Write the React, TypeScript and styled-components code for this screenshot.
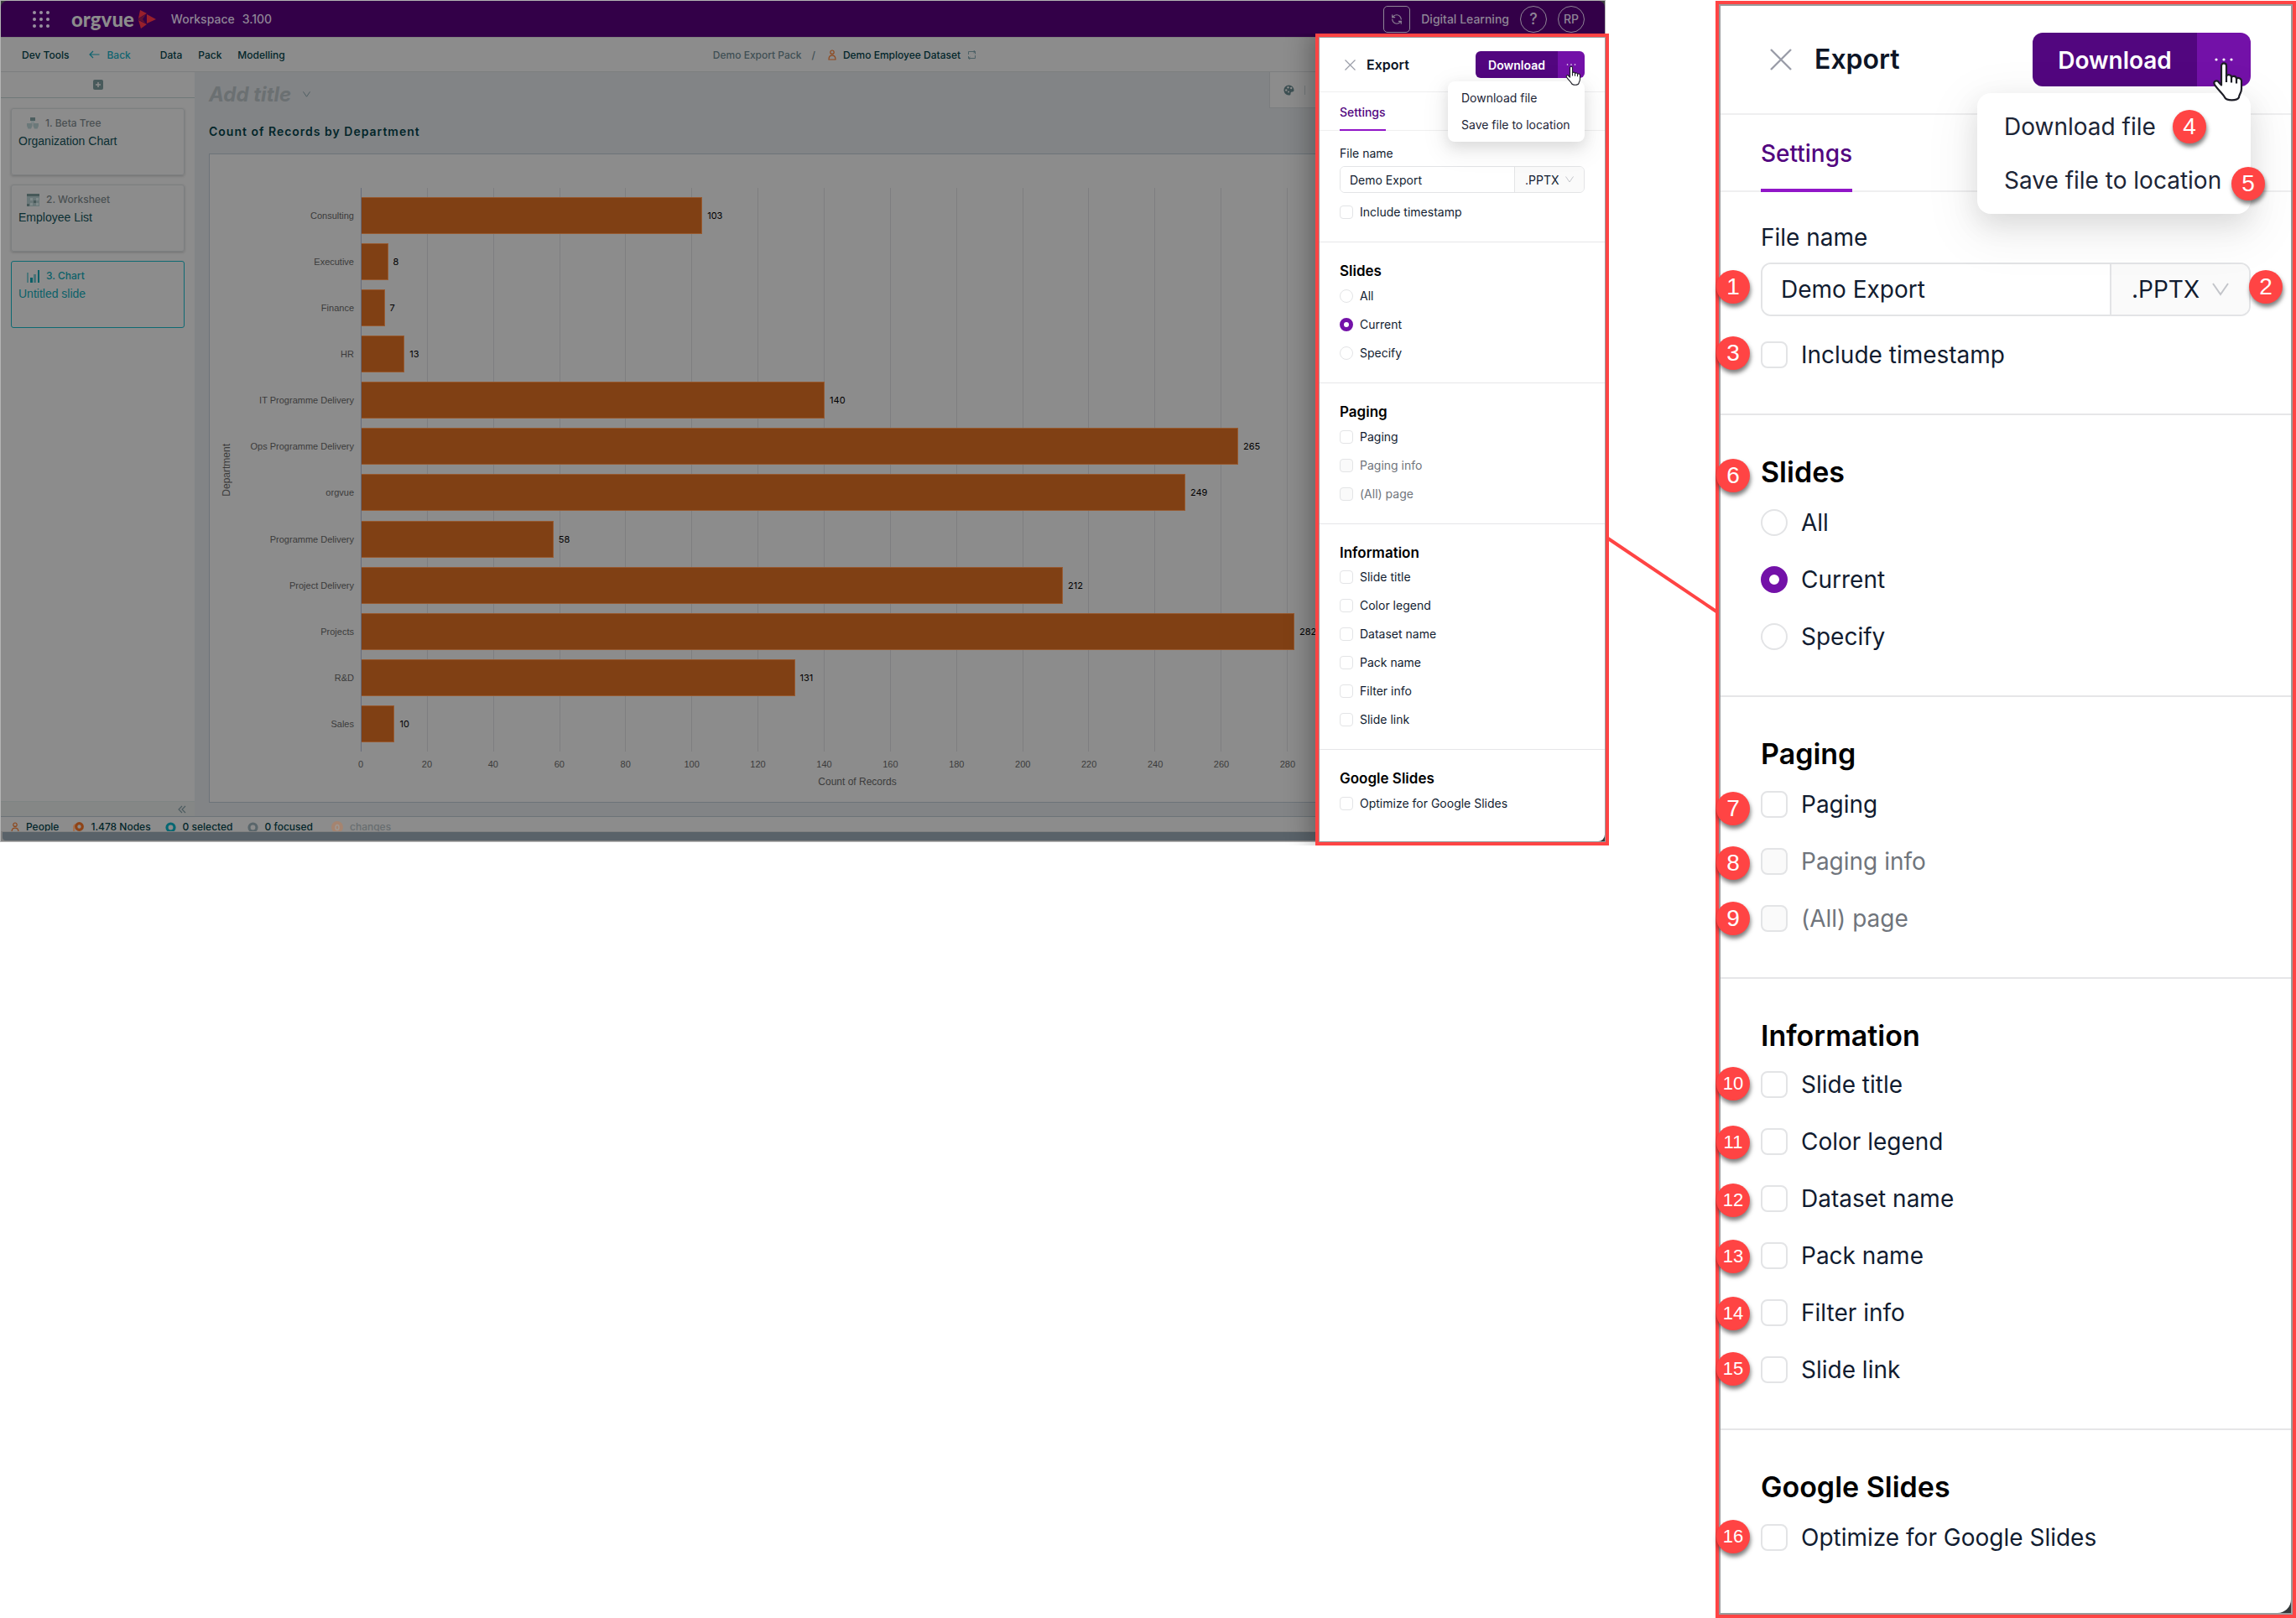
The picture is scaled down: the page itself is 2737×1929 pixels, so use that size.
import React, { useId } from "react";
import styled, { createGlobalStyle, css, ThemeProvider } from "styled-components";
import { RefreshCcw } from "lucide-react";

const GlobalStyle = createGlobalStyle`
  * {
    box-sizing: border-box;
  }

  body {
    margin: 0;
    background: #ffffff;
    font-family: Inter, "Liberation Sans", sans-serif;
  }

  h1, h2, h3, p, ul {
    margin: 0;
    padding: 0;
  }

  button, input, select {
    font-family: inherit;
  }

  svg {
    display: block;
    flex-shrink: 0;
  }
`;

const departments = [
  { name: "Consulting", count: 103 },
  { name: "Executive", count: 8 },
  { name: "Finance", count: 7 },
  { name: "HR", count: 13 },
  { name: "IT Programme Delivery", count: 140 },
  { name: "Ops Programme Delivery", count: 265 },
  { name: "orgvue", count: 249 },
  { name: "Programme Delivery", count: 58 },
  { name: "Project Delivery", count: 212 },
  { name: "Projects", count: 282 },
  { name: "R&D", count: 131 },
  { name: "Sales", count: 10 },
];

const axisMax = 300;
const ticks = Array.from({ length: 16 }, (_, i) => i * 20);

// Callout markers, centred on x / y inside the enlarged panel
const markers = [
  { n: 1, x: 21, y: 341 },
  { n: 2, x: 656, y: 341 },
  { n: 3, x: 21, y: 420 },
  { n: 4, x: 565, y: 150 },
  { n: 5, x: 635, y: 218 },
  { n: 6, x: 21, y: 566 },
  { n: 7, x: 21, y: 963 },
  { n: 8, x: 21, y: 1028 },
  { n: 9, x: 21, y: 1094 },
  { n: 10, x: 21, y: 1291 },
  { n: 11, x: 21, y: 1361 },
  { n: 12, x: 21, y: 1430 },
  { n: 13, x: 21, y: 1497 },
  { n: 14, x: 21, y: 1565 },
  { n: 15, x: 21, y: 1631 },
  { n: 16, x: 21, y: 1831 },
];

/* ---------- page ---------- */

const Page = styled.main`
  display: flex;
  align-items: flex-start;
`;

const Stage = styled.div`
  flex: 1;
  min-width: 0;
  display: grid;
`;

const Connector = styled.svg`
  width: 127px;
  height: 96px;
  margin-top: 638px;
  overflow: visible;
`;

const Callout = styled.div`
  position: relative;
  flex: 0 0 692px;
  min-width: 0;
  margin-top: 1px;
`;

const Marker = styled.span<{ $x: number; $y: number; $wide: boolean }>`
  position: absolute;
  z-index: 3;
  left: ${(p) => p.$x}px;
  top: ${(p) => p.$y}px;
  width: 40px;
  height: 40px;
  margin: -20px 0 0 -20px;
  border-radius: 50%;
  background: #ff4444;
  box-shadow: 1px 4px 5px rgba(0, 0, 0, 0.5);
  color: #ffffff;
  font-family: "Liberation Sans", Arial, sans-serif;
  font-size: ${(p) => (p.$wide ? 22 : 28)}px;
  line-height: 40px;
  text-align: center;
`;

/* ---------- application window ---------- */

const Window = styled.div`
  grid-area: 1 / 1;
  display: flex;
  flex-direction: column;
  min-width: 0;
  margin: 0 4px 4px 0;
  border: 1px solid #b4b4b4;
  background: #3a3d3e;
  overflow: hidden;
`;

const TopBar = styled.header`
  display: flex;
  align-items: center;
  height: 43px;
  padding: 0 24px 0 37px;
  border-radius: 8px 8px 0 0;
  background: #330048;
  color: #8f8596;
  font-size: 14px;
  font-weight: 500;
`;

const Brand = styled.span`
  display: flex;
  align-items: center;
  gap: 4px;
  margin: 0 17px 0 25px;
  color: #8c8c8c;
  font-family: Lato, sans-serif;
  font-size: 24px;
  font-weight: 900;
  line-height: 36px;
`;

const Version = styled.span`
  margin-left: 9px;
`;

const TopActions = styled.div`
  display: flex;
  align-items: center;
  gap: 13px;
  margin-left: auto;
`;

const TopButton = styled.button<{ $round?: boolean }>`
  display: flex;
  align-items: center;
  justify-content: center;
  width: 32px;
  height: 32px;
  padding: 0;
  border: 1px solid #8f8596;
  border-radius: ${(p) => (p.$round ? "50%" : "5px")};
  background: none;
  color: inherit;
  font-size: 14px;
  font-weight: 500;
`;

const HelpButton = styled(TopButton)`
  font-size: 18px;
`;

const NavBar = styled.nav`
  display: flex;
  align-items: center;
  height: 42px;
  border-top: 1px solid #808080;
  border-bottom: 1px solid #7c7e7f;
  background: #8c8c8c;
  font-size: 12px;
  font-weight: 500;
`;

const NavLinks = styled.div`
  display: flex;
  align-items: center;
  flex: 11;
  padding-left: 25px;
`;

const NavSpacer = styled.div`
  flex: 10;
`;

const NavLink = styled.a<{ $accent?: boolean }>`
  display: flex;
  align-items: center;
  gap: 8px;
  margin-right: ${(p) => (p.$accent ? 35 : 19)}px;
  color: ${(p) => (p.$accent ? "#0f6470" : "#02262a")};
  text-decoration: none;
`;

const DevLink = styled(NavLink)`
  margin-right: 24px;
`;

const Breadcrumb = styled.div`
  display: flex;
  align-items: center;
  gap: 12px;
  color: #3f4f54;
`;

const DatasetName = styled.a`
  display: flex;
  align-items: center;
  gap: 8px;
  margin-left: 3px;
  color: #02262a;
  text-decoration: none;
`;

const Body = styled.div`
  flex: 1;
  display: flex;
  min-height: 0;
`;

const Sidebar = styled.aside`
  display: flex;
  flex-direction: column;
  flex: 0 0 231px;
  background: #8c8c8c;
`;

const AddRow = styled.div`
  display: flex;
  align-items: center;
  justify-content: center;
  height: 31px;
  border-bottom: 1px solid #6f7878;
`;

const AddButton = styled.button`
  display: flex;
  align-items: center;
  justify-content: center;
  width: 12px;
  height: 12px;
  padding: 0;
  border: 0;
  border-radius: 2px;
  background: #485a5b;
`;

const SlideList = styled.ul`
  display: flex;
  flex-direction: column;
  flex: 1;
  gap: 11px;
  padding: 12px;
  list-style: none;
`;

const SlideCard = styled.li<{ $active?: boolean }>`
  height: 80px;
  padding: 7px 8px;
  border: 1px solid ${(p) => (p.$active ? "#0e6a73" : "#7c7f80")};
  border-radius: 3px;
  box-shadow: ${(p) => (p.$active ? "none" : "0 1px 3px rgba(0, 0, 0, 0.2)")};
  color: ${(p) => (p.$active ? "#0b6169" : "#0b2f33")};
  font-family: "Liberation Sans", Arial, sans-serif;
  font-size: 14px;
  line-height: 22px;
`;

const SlideType = styled.div<{ $active?: boolean }>`
  display: flex;
  align-items: center;
  gap: 8px;
  height: 20px;
  padding-left: 10px;
  color: ${(p) => (p.$active ? "#0b6169" : "#4a5052")};
  font-family: Inter, sans-serif;
  font-size: 12px;
  font-weight: 500;
`;

const SidebarFoot = styled.div`
  display: flex;
  align-items: center;
  justify-content: flex-end;
  height: 18px;
  padding-right: 10px;
  border-top: 1px solid #7f8483;
  background: #858786;
`;

const Main = styled.section`
  flex: 1;
  display: flex;
  flex-direction: column;
  min-width: 0;
  padding: 0 17px 16px;
  background: #828486;
`;

const MainHead = styled.div`
  display: flex;
  justify-content: space-between;
  margin-right: -17px;
`;

const TitleButton = styled.button`
  display: flex;
  align-items: center;
  gap: 14px;
  margin-top: 10px;
  padding: 0;
  border: 0;
  background: none;
  color: #6b7072;
  font-size: 24px;
  font-style: italic;
  font-weight: 700;
  line-height: 32px;
`;

const Toolbar = styled.div`
  display: flex;
  align-items: center;
  gap: 12px;
  width: 400px;
  height: 43px;
  padding-left: 16px;
  border: 1px solid #7a7d7f;
  border-top: 0;
  background: #8c8c8c;
`;

const ToolDivider = styled.span`
  width: 1px;
  height: 11px;
  background: #737879;
`;

const ChartTitle = styled.h2`
  margin: 18px 0 16px;
  color: #02262a;
  font-size: 14px;
  font-weight: 600;
  letter-spacing: 1px;
  line-height: 20px;
`;

const ChartPanel = styled.div`
  flex: 1;
  display: grid;
  grid-template-columns: 40px 140px 1fr;
  grid-template-rows: 1fr 22px 22px;
  padding: 40px 281px 16px 0;
  border: 1px solid #6c7379;
  background: #8c8c8c;
  font-family: "Liberation Sans", Arial, sans-serif;
  font-size: 11px;
  color: #3b3b3b;
`;

const YTitle = styled.div`
  align-self: center;
  justify-self: center;
  writing-mode: vertical-rl;
  transform: rotate(180deg);
  font-size: 12px;
  line-height: 14px;
`;

const Rows = styled.div`
  display: flex;
  flex-direction: column;
  justify-content: space-between;
  padding: 11px 0;
`;

const Category = styled.div`
  height: 44px;
  padding-right: 8px;
  line-height: 44px;
  text-align: right;
`;

const Plot = styled.div`
  display: grid;
`;

const GridLines = styled.div`
  grid-area: 1 / 1;
  display: flex;
  border-left: 1px solid #666c7c;
`;

const GridCell = styled.span`
  flex: 1;
  border-right: 1px solid #7e7e80;
`;

const Bars = styled(Rows)`
  grid-area: 1 / 1;
  padding-left: 1px;
`;

const BarRow = styled.div`
  display: flex;
  align-items: center;
  gap: 6px;
  height: 44px;
  color: #000000;
  font-family: Inter, sans-serif;
`;

const Bar = styled.div`
  height: 44px;
  border: 1px solid #97592f;
  border-left: 0;
  background: #804014;
`;

const TickRow = styled.div`
  grid-column: 3;
  display: flex;
  justify-content: space-between;
  padding-top: 8px;
  line-height: 14px;
`;

const Tick = styled.span`
  display: flex;
  justify-content: center;
  width: 0;
`;

const XTitle = styled.div`
  grid-column: 3;
  padding-top: 6px;
  font-size: 12px;
  line-height: 16px;
  text-align: center;
`;

const StatusBar = styled.footer`
  display: flex;
  align-items: flex-start;
  height: 18px;
  padding-left: 12px;
  border-top: 1px solid #6c7378;
  background: #8c8c8c;
  overflow: hidden;
  color: #02262a;
  font-size: 12px;
  font-weight: 500;
  line-height: 24px;
`;

const StatusItem = styled.span<{ $faded?: boolean }>`
  display: flex;
  align-items: center;
  gap: 8px;
  margin-left: ${(p) => (p.$faded ? 5 : 0)}px;
  margin-right: 17px;
  color: ${(p) => (p.$faded ? "#686e70" : "inherit")};
`;

const ScrollTrack = styled.div`
  padding: 1px 1px 1px 2px;
  background: #808080;
`;

const ScrollThumb = styled.div`
  height: 10px;
  border-radius: 0 0 0 4px;
  background: #596269;
`;

/* ---------- export drawer, sized by theme.k ---------- */

const Frame = styled.div`
  border: 4px solid #ff4444;
`;

const StageFrame = styled(Frame)`
  grid-area: 1 / 1;
  justify-self: end;
  position: relative;
  width: 350px;
  margin-top: 40px;
  box-shadow: -2px 0 28px 4px rgba(0, 0, 0, 0.3);
  clip-path: inset(0 0 0 -40px);
`;

const Edge = styled.div`
  border: ${(p) => p.theme.k}px solid #999b9c;
  background: #33383a;
`;

const Panel = styled.form`
  position: relative;
  border-bottom-right-radius: ${(p) => 8 * p.theme.k}px;
  background: #ffffff;
  color: #111c30;
  font-size: ${(p) => 14 * p.theme.k}px;
  line-height: ${(p) => 22 * p.theme.k}px;
`;

const DrawerHead = styled.div`
  display: flex;
  align-items: center;
  height: ${(p) => 65 * p.theme.k}px;
  padding: 0 ${(p) => 24 * p.theme.k}px;
  border-bottom: ${(p) => p.theme.k}px solid #efeff0;
`;

const CloseButton = styled.button`
  display: flex;
  align-items: center;
  justify-content: center;
  width: ${(p) => 24 * p.theme.k}px;
  height: ${(p) => 24 * p.theme.k}px;
  margin-right: ${(p) => 8 * p.theme.k}px;
  padding: 0;
  border: 0;
  background: none;
`;

const DrawerTitle = styled.h2`
  color: #0d1526;
  font-size: ${(p) => 16 * p.theme.k}px;
  font-weight: 600;
  line-height: ${(p) => 22 * p.theme.k}px;
`;

const Heading = styled.h3`
  color: #000000;
  font-size: ${(p) => 17 * p.theme.k}px;
  font-weight: 600;
  line-height: ${(p) => 22 * p.theme.k}px;
`;

const SplitButton = styled.div`
  position: relative;
  display: flex;
  height: ${(p) => 32 * p.theme.k}px;
  margin-left: auto;
`;

const DownloadButton = styled.button`
  width: ${(p) => 98 * p.theme.k}px;
  padding: ${(p) => p.theme.k}px 0 0;
  border: 0;
  border-radius: ${(p) => `${6 * p.theme.k}px 0 0 ${6 * p.theme.k}px`};
  background: #52067f;
  color: #ffffff;
  font-size: ${(p) => 14 * p.theme.k}px;
  font-weight: 600;
`;

const MoreButton = styled.button`
  display: flex;
  align-items: center;
  justify-content: center;
  width: ${(p) => 32 * p.theme.k}px;
  padding: 0;
  border: 0;
  border-radius: ${(p) => `0 ${6 * p.theme.k}px ${6 * p.theme.k}px 0`};
  background: #7311a8;
`;

const Menu = styled.div`
  position: absolute;
  z-index: 1;
  top: ${(p) => 36 * p.theme.k}px;
  right: 0;
  min-width: ${(p) => 163 * p.theme.k}px;
  padding: ${(p) => 4 * p.theme.k}px;
  border-radius: ${(p) => 8 * p.theme.k}px;
  background: #ffffff;
  box-shadow:
    0 ${(p) => 6 * p.theme.k}px ${(p) => 16 * p.theme.k}px rgba(0, 0, 0, 0.1),
    0 ${(p) => 9 * p.theme.k}px ${(p) => 28 * p.theme.k}px ${(p) => 8 * p.theme.k}px rgba(0, 0, 0, 0.05);
`;

const MenuItem = styled.button`
  display: block;
  width: 100%;
  padding: ${(p) => `${5 * p.theme.k}px ${12 * p.theme.k}px`};
  border: 0;
  background: none;
  color: #1c2536;
  font-size: ${(p) => 14 * p.theme.k}px;
  line-height: ${(p) => 22 * p.theme.k}px;
  text-align: left;
  white-space: nowrap;
`;

const Cursor = styled.svg`
  position: absolute;
  z-index: 2;
  top: ${(p) => 17 * p.theme.k}px;
  right: ${(p) => 4 * p.theme.k}px;
  width: ${(p) => 19 * p.theme.k}px;
  height: ${(p) => 24 * p.theme.k}px;
`;

const Tabs = styled.div`
  height: ${(p) => 46 * p.theme.k}px;
  padding: 0 ${(p) => 24 * p.theme.k}px;
  box-shadow: inset 0 ${(p) => -p.theme.k}px 0 #efeff0;
`;

const Tab = styled.button`
  height: 100%;
  padding: ${(p) => 2 * p.theme.k}px 0 0;
  border: 0;
  border-bottom: ${(p) => 2 * p.theme.k}px solid #9116c8;
  background: none;
  color: #52067f;
  font-size: ${(p) => 14 * p.theme.k}px;
  font-weight: 500;
`;

const Section = styled.section<{ $first?: boolean; $last?: boolean }>`
  padding: ${(p) => (p.$first ? 16 : 23) * p.theme.k}px ${(p) => 24 * p.theme.k}px
    ${(p) => (p.$last ? 34 : 24) * p.theme.k}px;
  border-bottom: ${(p) => (p.$last ? 0 : p.theme.k)}px solid #e6e6e8;
`;

const Options = styled.div<{ $tight?: boolean }>`
  display: flex;
  flex-direction: column;
  gap: ${(p) => 12 * p.theme.k}px;
  margin-top: ${(p) => (p.$tight ? 7 : 8) * p.theme.k}px;
`;

const FieldLabel = styled.label`
  display: block;
`;

const FileField = styled.div`
  display: flex;
  height: ${(p) => 32 * p.theme.k}px;
  margin: ${(p) => `${4 * p.theme.k}px 0 ${12 * p.theme.k}px`};
  border: ${(p) => p.theme.k}px solid #e3e4e6;
  border-radius: ${(p) => 6 * p.theme.k}px;
  overflow: hidden;
`;

const FileInput = styled.input`
  flex: 1;
  min-width: 0;
  padding: 0 ${(p) => 11 * p.theme.k}px;
  border: 0;
  background: #ffffff;
  color: inherit;
  font-size: ${(p) => 14 * p.theme.k}px;
`;

const TypeField = styled.div`
  position: relative;
  display: flex;
  align-items: center;
  width: ${(p) => 83 * p.theme.k}px;
  border-left: ${(p) => p.theme.k}px solid #e3e4e6;
  background: #fafafa;

  svg {
    position: absolute;
    right: ${(p) => 12 * p.theme.k}px;
    pointer-events: none;
  }
`;

const TypeSelect = styled.select`
  width: 100%;
  height: 100%;
  padding: 0 0 0 ${(p) => 12 * p.theme.k}px;
  border: 0;
  background: none;
  color: inherit;
  font-size: ${(p) => 14 * p.theme.k}px;
  appearance: none;
`;

const OptionLabel = styled.label<{ $disabled?: boolean }>`
  display: flex;
  align-items: center;
  gap: ${(p) => 8 * p.theme.k}px;
  height: ${(p) => 22 * p.theme.k}px;
  color: ${(p) => (p.$disabled ? "#70757c" : "inherit")};
`;

const box = css`
  width: ${(p) => 16 * p.theme.k}px;
  height: ${(p) => 16 * p.theme.k}px;
  margin: 0;
  border: ${(p) => p.theme.k}px solid #e3e4e6;
  background: #ffffff;
  appearance: none;
`;

const Checkbox = styled.input`
  ${box}
  border-radius: ${(p) => 4 * p.theme.k}px;

  &:disabled {
    background: #fafafa;
  }
`;

const Radio = styled.input`
  ${box}
  border-radius: 50%;

  &:checked {
    border: ${(p) => 5 * p.theme.k}px solid #7311a8;
  }
`;

/* ---------- icons ---------- */

const AppsIcon = () => (
  <svg width="22" height="22" viewBox="0 0 22 22" fill="#9a90a0">
    {[3, 11, 19].map((y) => [3, 11, 19].map((x) => <circle key={`${x}-${y}`} cx={x} cy={y} r="2" />))}
  </svg>
);

const LogoMark = () => (
  <svg width="23" height="24" viewBox="0 0 23 24" fill="#98202c">
    <path d="M3 1 L11 5 L1 11 Z" />
    <path d="M11 6 L22 12 L11 17 Z" />
    <path d="M1 13 L11 18 L4 23 Z" />
    <path d="M0 12 L10 6 L6 12 L10 17 Z" fill="#5e1233" />
  </svg>
);

const BackArrow = () => (
  <svg width="13" height="10" viewBox="0 0 13 10" fill="none" stroke="#0f6470" strokeWidth="1.2">
    <path d="M12.5 5 H1 M5 1 L1 5 L5 9" />
  </svg>
);

const PersonIcon = ({ color = "#8f481c" }: { color?: string }) => (
  <svg width="10" height="13" viewBox="0 0 10 13" fill="none" stroke={color} strokeWidth="1.2">
    <circle cx="5" cy="3.2" r="2.2" />
    <path d="M1 12 C1 8.5 3 7.2 5 7.2 S9 8.5 9 12 Z" />
  </svg>
);

const SwapIcon = () => (
  <svg width="11" height="11" viewBox="0 0 11 11" fill="none" stroke="#4d6166" strokeWidth="1">
    <path d="M1.5 5 V1.5 H9.5 V4.5 M9.5 6 V9.5 H1.5 V7 M7.5 0 L9.5 1.5 L7.5 3 M3.5 8 L1.5 9.5 L3.5 11" />
  </svg>
);

const TreeIcon = () => (
  <svg width="14" height="14" viewBox="0 0 14 14">
    <rect x="4" y="0" width="6" height="4" fill="#4c5e5f" />
    <rect x="5" y="4" width="4" height="3" fill="#7d8788" />
    <path d="M0 7 H6.500 V10 L5 13.500 H1.500 L0 10 Z M7.500 7 H14 V10 L12.500 13.500 H9 L7.500 10 Z" fill="#6b797a" />
  </svg>
);

const SheetIcon = () => (
  <svg width="15" height="15" viewBox="0 0 15 15">
    <rect width="15" height="15" fill="#6a7879" />
    <rect width="15" height="3" fill="#475959" />
    <path d="M4 5 H7 V8 H4 Z M11 5 H14 V8 H11 Z M4 11 H7 V14 H4 Z M11 11 H14 V14 H11 Z" fill="#7f8a8a" />
    <rect x="8" y="8" width="3" height="3" fill="#475959" />
    <rect x="0" y="12" width="3" height="3" fill="#475959" />
  </svg>
);

const ColumnsIcon = () => (
  <svg width="15" height="15" viewBox="0 0 15 15" fill="#0b5f67">
    <rect x="0" y="3" width="2" height="12" opacity="0.5" />
    <rect x="4" y="9" width="3" height="6" />
    <rect x="8" y="5" width="3" height="10" opacity="0.55" />
    <rect x="13" y="0" width="2" height="15" />
  </svg>
);

const PaletteIcon = () => (
  <svg width="13" height="13" viewBox="0 0 13 13">
    <path d="M6.500 0.500 A6 6 0 1 0 8 12.300 C9 11.600 8 10 9 9 C10 8 12.500 9 12.500 6.500 A6 6 0 0 0 6.500 0.500 Z" fill="#3d5053" />
    <g fill="#8c8c8c">
      <circle cx="3.200" cy="6.500" r="1.200" />
      <circle cx="5.500" cy="3.200" r="1.200" />
      <circle cx="9.200" cy="4" r="1.200" />
      <circle cx="6" cy="8.500" r="1" />
    </g>
  </svg>
);

const FilterIcon = () => (
  <svg width="13" height="13" viewBox="0 0 13 13" fill="#3d5053">
    <path d="M0 0 H13 L8 6 V12 L5 10 V6 Z" />
  </svg>
);

const Chevron = ({ size, color }: { size: number; color: string }) => (
  <svg width={size} height={size} viewBox="0 0 10 10" fill="none" stroke={color} strokeWidth="1">
    <path d="M0.500 1.500 L5 8 L9.500 1.500" />
  </svg>
);

const RingIcon = ({ color, trail }: { color: string; trail?: boolean }) => (
  <svg width="13" height="13" viewBox="0 0 13 13" fill="none">
    {trail && <path d="M3 3 C0 6 0 9 2 12.500" stroke="#a5714f" strokeWidth="2.500" />}
    <circle cx={trail ? 7.500 : 6.500} cy={trail ? 5.500 : 6.500} r={trail ? 3.800 : 4.500} stroke={color} strokeWidth="3.200" />
  </svg>
);

const ChangesIcon = () => (
  <svg width="14" height="14" viewBox="0 0 14 14" fill="none">
    <circle cx="7" cy="7" r="7" fill="#a58470" />
    <ellipse cx="7" cy="7.500" rx="2" ry="3" stroke="#9d9894" strokeWidth="1.500" />
  </svg>
);

const HandCursor = () => (
  <Cursor viewBox="0 0 19 24" aria-hidden="true">
    <path
      d="M5.500 2.800 C5.500 0.700 8.500 0.700 8.500 2.800 V9 C9 7.600 11.500 7.900 11.500 9.600 C12.200 8.400 14.500 8.800 14.500 10.500 C15.300 9.500 17.500 10 17.500 11.800 V16.500 C17.500 18.800 16 20 16 21.500 C15 23.800 8.500 23.800 7.500 21.500 C6.500 19.500 3 16.500 1.500 14 C0.300 12 2.800 10.800 4 12.600 L5.500 14.200 Z"
      fill="#ffffff"
      stroke="#1d1d26"
      strokeWidth="1.100"
      strokeLinejoin="round"
    />
    <path d="M8.500 8.500 V12.500 M11.500 9.500 V12.800 M14.500 10.500 V13.200" fill="none" stroke="#1d1d26" strokeWidth="1.100" />
  </Cursor>
);

/* ---------- components ---------- */

type Option = { label: string; checked?: boolean; disabled?: boolean };

interface OptionSectionProps {
  title: string;
  options: Option[];
  radio?: boolean;
  tight?: boolean;
  last?: boolean;
}

const OptionSection: React.FC<OptionSectionProps> = ({ title, options, radio, tight, last }) => {
  const group = useId();

  return (
    <Section $last={last}>
      <Heading>{title}</Heading>
      <Options $tight={tight}>
        {options.map((o) => (
          <OptionLabel key={o.label} $disabled={o.disabled}>
            {radio ? (
              <Radio type="radio" name={group} defaultChecked={o.checked} />
            ) : (
              <Checkbox type="checkbox" disabled={o.disabled} />
            )}
            {o.label}
          </OptionLabel>
        ))}
      </Options>
    </Section>
  );
};

const ExportDrawer: React.FC<{ k: number }> = ({ k }) => {
  const id = useId();

  return (
    <ThemeProvider theme={{ k }}>
      <Edge>
        <Panel onSubmit={(e) => e.preventDefault()}>
          <DrawerHead>
            <CloseButton type="button" aria-label="Close">
              <svg width={13 * k} height={13 * k} viewBox="0 0 13 13" stroke="#9a9da8" strokeWidth="1.2">
                <path d="M0.500 0.500 L12.500 12.500 M12.500 0.500 L0.500 12.500" />
              </svg>
            </CloseButton>
            <DrawerTitle>Export</DrawerTitle>
            <SplitButton>
              <DownloadButton type="button">Download</DownloadButton>
              <MoreButton type="button" aria-label="More">
                <svg width={12 * k} height={2 * k} viewBox="0 0 12 2" fill="#ffffff">
                  <circle cx="1.500" cy="1" r="0.800" />
                  <circle cx="6" cy="1" r="0.800" />
                  <circle cx="10.500" cy="1" r="0.800" />
                </svg>
              </MoreButton>
              <Menu>
                <MenuItem type="button">Download file</MenuItem>
                <MenuItem type="button">Save file to location</MenuItem>
              </Menu>
              <HandCursor />
            </SplitButton>
          </DrawerHead>

          <Tabs>
            <Tab type="button">Settings</Tab>
          </Tabs>

          <Section $first>
            <FieldLabel htmlFor={`${id}-name`}>File name</FieldLabel>
            <FileField>
              <FileInput id={`${id}-name`} type="text" defaultValue="Demo Export" />
              <TypeField>
                <TypeSelect aria-label="File type" defaultValue=".PPTX">
                  <option>.PPTX</option>
                </TypeSelect>
                <Chevron size={10 * k} color="#c3c5ca" />
              </TypeField>
            </FileField>
            <OptionLabel>
              <Checkbox type="checkbox" />
              Include timestamp
            </OptionLabel>
          </Section>

          <OptionSection
            title="Slides"
            radio
            options={[{ label: "All" }, { label: "Current", checked: true }, { label: "Specify" }]}
          />
          <OptionSection
            title="Paging"
            options={[
              { label: "Paging" },
              { label: "Paging info", disabled: true },
              { label: "(All) page", disabled: true },
            ]}
          />
          <OptionSection
            title="Information"
            tight
            options={[
              { label: "Slide title" },
              { label: "Color legend" },
              { label: "Dataset name" },
              { label: "Pack name" },
              { label: "Filter info" },
              { label: "Slide link" },
            ]}
          />
          <OptionSection title="Google Slides" last options={[{ label: "Optimize for Google Slides" }]} />
        </Panel>
      </Edge>
    </ThemeProvider>
  );
};

const RecordsChart: React.FC = () => (
  <ChartPanel>
    <YTitle>Department</YTitle>
    <Rows>
      {departments.map((d) => (
        <Category key={d.name}>{d.name}</Category>
      ))}
    </Rows>
    <Plot>
      <GridLines>
        {ticks.slice(1).map((t) => (
          <GridCell key={t} />
        ))}
      </GridLines>
      <Bars>
        {departments.map((d) => (
          <BarRow key={d.name}>
            <Bar style={{ width: `${(d.count / axisMax) * 100}%` }} />
            {d.count}
          </BarRow>
        ))}
      </Bars>
    </Plot>
    <TickRow>
      {ticks.map((t) => (
        <Tick key={t}>{t}</Tick>
      ))}
    </TickRow>
    <XTitle>Count of Records</XTitle>
  </ChartPanel>
);

const Workspace: React.FC = () => (
  <Window>
    <TopBar>
      <AppsIcon />
      <Brand>
        orgvue
        <LogoMark />
      </Brand>
      Workspace
      <Version>3.100</Version>
      <TopActions>
        <TopButton type="button" aria-label="Refresh">
          <RefreshCcw size={14} strokeWidth={2} />
        </TopButton>
        Digital Learning
        <HelpButton type="button" $round>?</HelpButton>
        <TopButton type="button" $round>RP</TopButton>
      </TopActions>
    </TopBar>

    <NavBar>
      <NavLinks>
        <DevLink href="#dev">Dev Tools</DevLink>
        <NavLink href="#back" $accent>
          <BackArrow />
          Back
        </NavLink>
        <NavLink href="#data">Data</NavLink>
        <NavLink href="#pack">Pack</NavLink>
        <NavLink href="#modelling">Modelling</NavLink>
      </NavLinks>
      <Breadcrumb>
        <span>Demo Export Pack</span>
        <span>/</span>
        <DatasetName href="#dataset">
          <PersonIcon />
          Demo Employee Dataset
          <SwapIcon />
        </DatasetName>
      </Breadcrumb>
      <NavSpacer />
    </NavBar>

    <Body>
      <Sidebar>
        <AddRow>
          <AddButton type="button" aria-label="Add slide">
            <svg width="8" height="8" viewBox="0 0 8 8" stroke="#8c8c8c" strokeWidth="1.500">
              <path d="M4 1 V7 M1 4 H7" />
            </svg>
          </AddButton>
        </AddRow>
        <SlideList>
          <SlideCard>
            <SlideType>
              <TreeIcon />
              1. Beta Tree
            </SlideType>
            Organization Chart
          </SlideCard>
          <SlideCard>
            <SlideType>
              <SheetIcon />
              2. Worksheet
            </SlideType>
            Employee List
          </SlideCard>
          <SlideCard $active>
            <SlideType $active>
              <ColumnsIcon />
              3. Chart
            </SlideType>
            Untitled slide
          </SlideCard>
        </SlideList>
        <SidebarFoot>
          <svg width="10" height="10" viewBox="0 0 10 10" fill="none" stroke="#4b5b60" strokeWidth="1.100">
            <path d="M5 1 L1 5 L5 9 M9 1 L5 5 L9 9" />
          </svg>
        </SidebarFoot>
      </Sidebar>

      <Main>
        <MainHead>
          <TitleButton type="button">
            Add title
            <Chevron size={9} color="#4b5b60" />
          </TitleButton>
          <Toolbar>
            <PaletteIcon />
            <ToolDivider />
            <FilterIcon />
          </Toolbar>
        </MainHead>
        <ChartTitle>Count of Records by Department</ChartTitle>
        <RecordsChart />
      </Main>
    </Body>

    <StatusBar>
      <StatusItem>
        <PersonIcon />
        People
      </StatusItem>
      <StatusItem>
        <RingIcon color="#8f4316" trail />
        1.478 Nodes
      </StatusItem>
      <StatusItem>
        <RingIcon color="#076772" />
        0 selected
      </StatusItem>
      <StatusItem>
        <RingIcon color="#5a666b" />
        0 focused
      </StatusItem>
      <StatusItem $faded>
        <ChangesIcon />
        changes
      </StatusItem>
    </StatusBar>
    <ScrollTrack>
      <ScrollThumb />
    </ScrollTrack>
  </Window>
);

const App: React.FC = () => (
  <Page>
    <GlobalStyle />
    <Stage>
      <Workspace />
      <StageFrame>
        <ExportDrawer k={1} />
      </StageFrame>
    </Stage>
    <Connector viewBox="0 0 127 96" aria-hidden="true">
      <path d="M-1 4 L128 91" stroke="#ff4444" strokeWidth="4" />
    </Connector>
    <Callout>
      <Frame>
        <ExportDrawer k={2} />
      </Frame>
      {markers.map((m) => (
        <Marker key={m.n} $x={m.x} $y={m.y} $wide={m.n > 9}>
          {m.n}
        </Marker>
      ))}
    </Callout>
  </Page>
);

export default App;
